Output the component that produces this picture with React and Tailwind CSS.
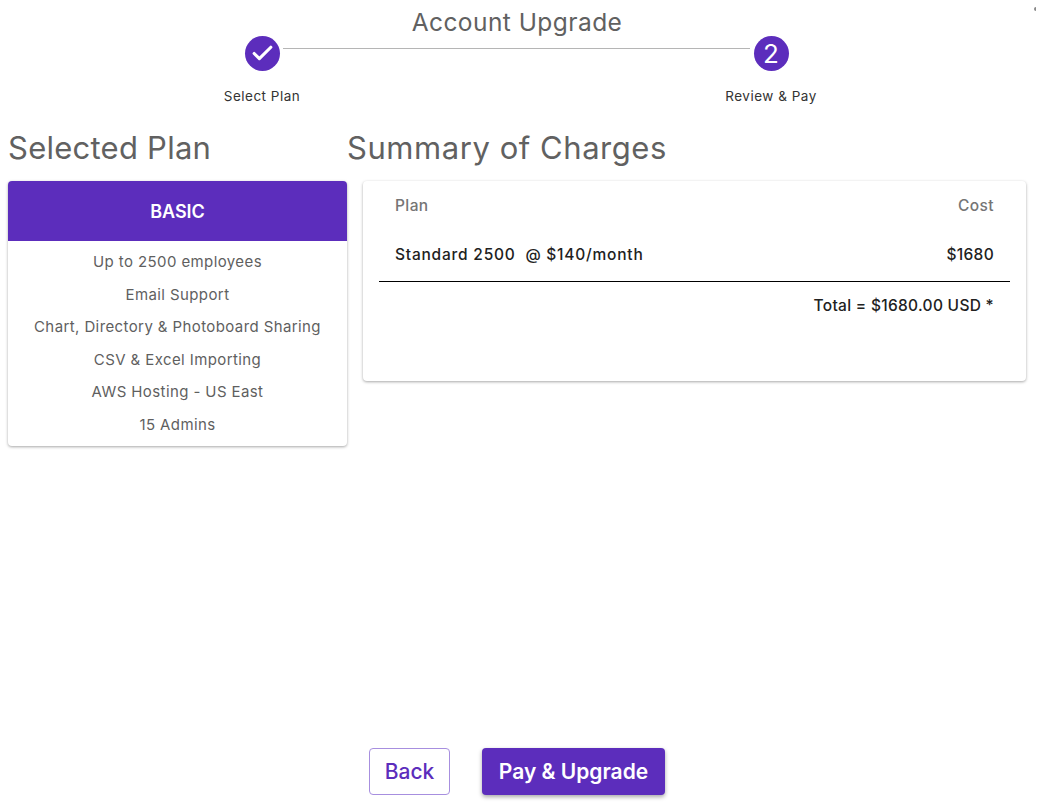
import React from 'react';
import { Check } from 'lucide-react';

const features = [
  'Up to 2500 employees',
  'Email Support',
  'Chart, Directory & Photoboard Sharing',
  'CSV & Excel Importing',
  'AWS Hosting - US East',
  '15 Admins',
];

const cardShadow = 'shadow-[0_1px_3px_rgba(0,0,0,0.35)]';

const Step = ({ label, children }) => (
  <div className="flex w-[38px] flex-col items-center">
    <div className="flex h-[35px] w-[35px] items-center justify-center rounded-full bg-[#5c2dbc] text-white">
      {children}
    </div>
    <span className="mt-[16px] whitespace-nowrap text-[13.5px] leading-[18px] tracking-[0.5px] text-[#333333]">{label}</span>
  </div>
);

export default function App() {
  return (
    <div className="relative flex h-[803px] flex-col overflow-hidden bg-white font-['Inter',sans-serif]">
      <span className="absolute right-[1px] top-[7px] h-[4px] w-[2px] rounded-l-full bg-[#888888]"></span>

      <h1 className="pt-[7px] pr-[3px] text-center text-[24.5px] font-normal leading-[30px] tracking-[0.45px] text-[#616161]">Account Upgrade</h1>

      <div className="-mt-px flex ml-[243px] w-[547px]">
        <Step label="Select Plan">
          <Check size={25} strokeWidth={3} />
        </Step>
        <div className="mx-[2px] mt-[12px] h-px flex-1 bg-[#b5b5b5]"></div>
        <Step label="Review & Pay">
          <span className="text-[26px] leading-none">2</span>
        </Step>
      </div>

      <div className="mt-[23px] flex items-start pl-[8px]">
        <div className="w-[339px] shrink-0">
          <h2 className="text-[31px] font-normal leading-[40px] tracking-[0.25px] text-[#616161]">Selected Plan</h2>
          <div className={`mt-[13px] overflow-hidden rounded-[4px] bg-white ${cardShadow}`}>
            <div className="flex h-[60px] items-center justify-center bg-[#5c2dbc] text-[18px] font-semibold text-white">BASIC</div>
            <ul className="flex h-[205px] flex-col items-center pt-[5px] text-[15px] leading-[32.6px] tracking-[0.4px] text-[#5f5f5f]">
              {features.map((f) => (
                <li key={f}>{f}</li>
              ))}
            </ul>
          </div>
        </div>

        <div className="flex-1 pr-[11px]">
          <h2 className="text-[31px] font-normal leading-[40px] tracking-[0.55px] text-[#616161]">Summary of Charges</h2>
          <div className={`mt-[13px] ml-[16px] h-[200px] rounded-[4px] bg-white px-[16px] ${cardShadow}`}>
            <div className="flex justify-between px-[16px] pt-[15px] text-[15.5px] font-medium leading-[20px] tracking-[0.4px] text-[#757575]">
              <span>Plan</span>
              <span>Cost</span>
            </div>
            <div className="mt-[17px] flex h-[49px] items-center justify-between border-b border-black px-[16px] pb-[5px] text-[15.5px] font-medium text-[#212121]">
              <span className="whitespace-pre tracking-[0.78px]">Standard 2500  @ $140/month</span>
              <span className="tracking-[0.3px]">$1680</span>
            </div>
            <div className="px-[16px] pt-[14px] text-right text-[15.5px] font-medium leading-[20px] tracking-[0.3px] text-[#212121]">Total = $1680.00 USD *</div>
          </div>
        </div>
      </div>

      <div className="mt-auto mb-[8px] flex justify-start gap-[32px] pl-[369px]">
        <button className="h-[47px] w-[81px] rounded-[4px] border border-[#a78fdf] bg-white text-[21px] font-medium text-[#5c2dbc]">Back</button>
        <button className="h-[47px] w-[183px] rounded-[4px] bg-[#5c2dbc] text-[21px] font-semibold text-white shadow-[0_2px_4px_rgba(0,0,0,0.35)]">Pay &amp; Upgrade</button>
      </div>
    </div>
  );
}
